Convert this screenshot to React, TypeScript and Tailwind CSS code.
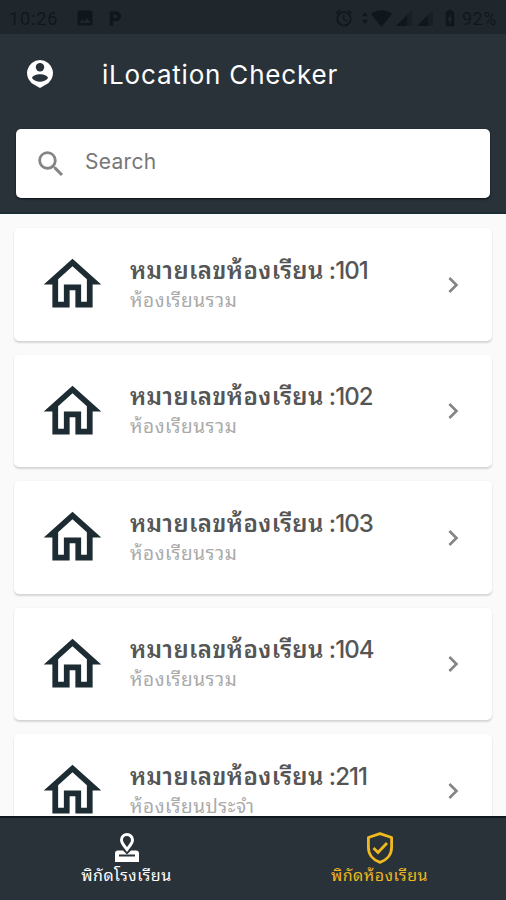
import React from 'react';
import {
  MdAccessAlarm,
  MdBatteryChargingFull,
  MdChevronRight,
  MdImage,
  MdOutlineHome,
  MdSearch,
} from 'react-icons/md';

interface Room {
  id: string;
  type: string;
}

const rooms: Room[] = [
  { id: '101', type: 'ห้องเรียนรวม' },
  { id: '102', type: 'ห้องเรียนรวม' },
  { id: '103', type: 'ห้องเรียนรวม' },
  { id: '104', type: 'ห้องเรียนรวม' },
  { id: '211', type: 'ห้องเรียนประจำ' },
];

const StatusBar: React.FC = () => (
  <div className="flex h-[34px] shrink-0 items-center bg-[#1f272d] pl-[9px] pr-[7px] pt-[2px] text-[#10171c]">
    <span className="w-[66px] text-[18px] tracking-[0.9px]">10:26</span>
    <MdImage className="h-[20px] w-[20px]" />
    <svg className="ml-[13px] h-4 w-[14px]" viewBox="0 0 14 16" fill="none" stroke="currentColor" strokeWidth="3.5">
      <path d="M3.500 16V3H8a3.200 3.200 0 0 1 0 6.500H4" />
    </svg>
    <div className="ml-auto flex items-center">
      <MdAccessAlarm className="h-[20px] w-[20px]" />
      <svg className="ml-[8px] h-[14px] w-[6px]" viewBox="0 0 7 16" fill="currentColor">
        <path d="M3.5 1L7 6H0zM3.5 15L0 10h7z" />
      </svg>
      <svg className="ml-[3px] h-[17px] w-[21px]" viewBox="0 0 21 17" fill="currentColor">
        <path d="M10.5 17L0 4C6-1 15-1 21 4z" />
      </svg>
      <svg className="ml-1 h-[16px] w-[17px]" viewBox="0 0 17 16" fill="currentColor">
        <path d="M0 16L16 0v16z" opacity=".45" />
        <path d="M0 16L11 5v11z" />
      </svg>
      <svg className="ml-1 h-[16px] w-[17px]" viewBox="0 0 17 16" fill="currentColor">
        <path d="M0 16L16 0v16z" opacity=".45" />
        <path d="M0 16L11 5v11z" />
      </svg>
      <MdBatteryChargingFull className="ml-[6px] h-[20px] w-[20px]" />
      <span className="ml-[2px] w-[37px] text-[18px] tracking-[0.5px]">92%</span>
    </div>
  </div>
);

const ProfileIcon: React.FC = () => (
  <svg className="relative -top-[2px] h-[30px] w-[28px]" viewBox="0 0 28 30">
    <path d="M14 1a13 13 0 0 1 5.2 24.9L14 29l-5.2-3.1A13 13 0 0 1 14 1z" fill="#fff" />
    <circle cx="14" cy="8.3" r="4.2" fill="#293239" />
    <path d="M6 19c1.5-5 14.500-5 16 0-3.500 5-12.500 5-16 0z" fill="#293239" />
  </svg>
);

const RoomCard: React.FC<{ room: Room }> = ({ room }) => (
  <div className="flex h-[112.5px] shrink-0 items-center rounded-[5px] bg-white pl-6 pr-[23px] pt-px shadow-[0_2px_2px_rgba(0,0,0,0.14),0_0_2px_rgba(0,0,0,0.06)]">
    <MdOutlineHome className="h-[69px] w-[69px] text-[#1d2b32]" />
    <div className="ml-[23px] flex-1 whitespace-nowrap">
      <div className="flex h-[32px] items-baseline text-[24px] leading-[32px] text-[#555]">
        <span className="font-semibold tracking-[0.4px]">หมายเลขห้องเรียน</span>
        <span className="ml-[5px] font-['Inter'] font-medium tracking-[-0.9px]">:{room.id}</span>
      </div>
      <div className="h-[28px] text-[19px] leading-[28px] tracking-[0.5px] text-[#aaa]">{room.type}</div>
    </div>
    <MdChevronRight className="h-[32px] w-[32px] text-[#858585]" />
  </div>
);

const BottomNav: React.FC = () => (
  <div className="flex h-[84px] shrink-0 border-t-2 border-[#10191f] bg-[#293239] pt-[14px] text-[16px]">
    <div className="flex flex-1 flex-col items-center text-white">
      <svg className="h-[32px] w-[28px]" viewBox="0 0 28 32" fill="none" stroke="currentColor">
        <path d="M14 17.500C10.500 13 8.500 11 8.500 8a5.500 5.500 0 0 1 11 0c0 3-2 5-5.500 9.500z" strokeWidth="3" />
        <path d="M10 18.500H5q-3 0-3 3V30h24v-8.500q0-3-3-3h-5l-4 4z" fill="currentColor" stroke="none" />
        <path d="M6 23.500h16" stroke="#293239" strokeWidth="2" />
      </svg>
      <span className="leading-[24px] tracking-[0.5px]">พิกัดโรงเรียน</span>
    </div>
    <div className="flex flex-1 flex-col items-center text-[#efb91f]">
      <svg className="h-[32px] w-[28px]" viewBox="0 0 28 32" fill="none" stroke="currentColor" strokeWidth="2.800">
        <path d="M14 1.700L2.400 5.500v10c0 7 4.600 12.500 11.600 14.800 7-2.300 11.600-7.800 11.600-14.800v-10z" strokeLinejoin="round" />
        <path d="M7.500 16l4.500 4.500 9-9.500" />
      </svg>
      <span className="leading-[24px] tracking-[0.5px]">พิกัดห้องเรียน</span>
    </div>
  </div>
);

const App: React.FC = () => {
  return (
    <div className="flex h-[900px] w-[506px] flex-col overflow-hidden bg-[#fafafa] font-['Roboto','Noto_Sans_Thai_Looped','Noto_Looped_Thai','Loma','Garuda','Waree','Noto_Sans_Thai',sans-serif]">
      <StatusBar />
      <div className="flex h-[83px] shrink-0 items-center bg-[#293239] pl-[26px] text-white">
        <ProfileIcon />
        <h1 className="ml-[48px] pb-[2px] font-['Inter'] text-[26px] tracking-[0.8px]">iLocation Checker</h1>
      </div>
      <div className="h-[97px] shrink-0 border-b-2 border-[#1d2b32] bg-[#293239] px-4 pt-[12px]">
        <div className="flex h-[69px] items-center rounded-[5px] bg-white pl-[18px] shadow-[0_1px_2px_#0b1117]">
          <MdSearch className="h-[34px] w-[34px] text-[#858585]" />
          <span className="ml-[17px] pb-[3px] font-['Inter'] text-[21px] tracking-[0.3px] text-[#777]">Search</span>
        </div>
      </div>
      <div className="flex min-h-0 flex-1 flex-col gap-[14px] overflow-hidden px-[14px] pt-[14px]">
        {rooms.map((room) => (
          <RoomCard key={room.id} room={room} />
        ))}
      </div>
      <BottomNav />
    </div>
  );
};

export default App;
